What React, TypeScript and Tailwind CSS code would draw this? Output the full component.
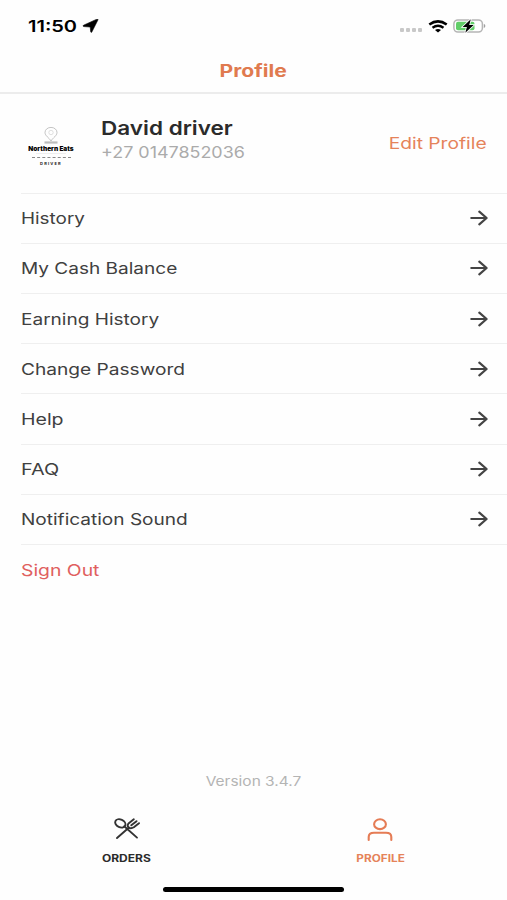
import React from 'react';

interface MenuItem {
  label: string;
  // horizontal stretch for the label
  stretch: string;
}

const menuItems: MenuItem[] = [
  { label: 'History', stretch: 'scale-x-[1.18]' },
  { label: 'My Cash Balance', stretch: 'scale-x-[1.19]' },
  { label: 'Earning History', stretch: 'scale-x-[1.19]' },
  { label: 'Change Password', stretch: 'scale-x-[1.195]' },
  { label: 'Help', stretch: 'scale-x-[1.22]' },
  { label: 'FAQ', stretch: 'scale-x-[1.24]' },
  { label: 'Notification Sound', stretch: 'scale-x-[1.19]' },
];

const StatusBar: React.FC = () => (
  <div className="h-[50px] flex items-center justify-between pl-[28px] pr-[20px] pt-[2px]">
    <div className="flex items-center">
      <span className="w-[50px] text-[16px] leading-none font-semibold text-black">
        <span className="inline-block origin-left scale-x-[1.25]">11:50</span>
      </span>
      <svg className="ml-[4px]" width="17" height="14" viewBox="0 0 17 14">
        <path d="M16 0.8 9.8 13.1Q9 13.9 8.700 12.800L8.200 8 2 7.600Q0 7.100 1.600 6.200L14.800 0.2Q16.400 -0.100 16 0.800Z" fill="#000" stroke="#000" strokeWidth="0.6" />
      </svg>
    </div>
    <div className="flex items-center">
      <div className="flex gap-[2px] mt-[8px] mr-[6px]">
        <span className="w-[4px] h-[4px] rounded-[1px] bg-[#c8c8c8]"></span>
        <span className="w-[4px] h-[4px] rounded-[1px] bg-[#c8c8c8]"></span>
        <span className="w-[4px] h-[4px] rounded-[1px] bg-[#c8c8c8]"></span>
        <span className="w-[4px] h-[4px] rounded-[1px] bg-[#c8c8c8]"></span>
      </div>
      <svg width="20" height="13" viewBox="0 0 20 13">
        <path d="M1.300 4.600Q10 -1.800 18.700 4.600" fill="none" stroke="#000" strokeWidth="2.500" />
        <path d="M4.500 7.800Q10 3.800 15.500 7.800" fill="none" stroke="#000" strokeWidth="2.300" />
        <path d="M7 10Q10 7.900 13 10L10 12.600Z" fill="#000" />
      </svg>
      <svg className="ml-[5px]" width="34" height="16" viewBox="0 0 34 16">
        <rect x="0.9" y="1.900" width="28.500" height="12.200" rx="4" fill="#fff" stroke="#b5b5b5" strokeWidth="1.500" />
        <rect x="3" y="3.800" width="18.500" height="8.400" rx="2" fill="#62cf69" />
        <path d="M30.800 5.800Q34 8 30.800 10.200Z" fill="#a0a0a0" />
        <path d="M17.800 1.300 9.600 8.900H13.900L12.300 14.800 20.700 7.100H16.200Z" fill="#000" stroke="#fff" strokeWidth="1.600" paintOrder="stroke" />
      </svg>
    </div>
  </div>
);

const Avatar: React.FC = () => (
  <div className="w-[60px] h-[60px] flex flex-col items-center overflow-hidden text-[#222]">
    <svg className="mt-[8px] shrink-0" width="16" height="17" viewBox="0 0 16 17">
      <path d="M8 14C6 10.500 2 9 2 5.400A6 5 0 0 1 14 5.400C14 9 10 10.500 8 14Z" fill="none" stroke="#aaa" strokeWidth="0.7" />
      <circle cx="8" cy="5.500" r="2.200" fill="none" stroke="#ccc" strokeWidth="0.6" />
      <path d="M1.500 15.500H14.500" stroke="#bdbdbd" strokeWidth="2.200" />
    </svg>
    <span className="mt-px text-[6px] leading-[7px] font-black text-black whitespace-nowrap scale-x-[1.08]">Northern Eats</span>
    <div className="mt-px h-px w-[30px] bg-[#eeeeee]"></div>
    <div className="mt-[3px] h-[2px] w-[39px] border-t border-dashed border-[#888]"></div>
    <span className="mt-[3px] text-[4px] leading-[4px] font-bold tracking-[1.2px] whitespace-nowrap">DRIVER</span>
  </div>
);

const ArrowIcon: React.FC = () => (
  <svg width="18" height="16" viewBox="0 0 18 16" fill="none" stroke="#444" strokeWidth="2.200" strokeLinecap="round" strokeLinejoin="round">
    <path d="M1.300 8H16.500M9.300 1.700 16.600 8 9.300 14.300" />
  </svg>
);

const OrdersIcon: React.FC = () => (
  <svg width="28" height="22" viewBox="0 0 28 22" fill="none" stroke="#333" strokeWidth="1.900" strokeLinecap="round" strokeLinejoin="round">
    <ellipse cx="7.300" cy="5.400" rx="5.400" ry="3.800" transform="rotate(25 7.300 5.400)" />
    <path d="M11.200 8.300 24 19.600M4 20 16 9.500" />
    <path d="M20.800 1.300 15.800 5.200Q13.700 7.500 15.500 9.400 17.800 11.200 20.800 9.300L26 5.200M23.500 3.200 18.300 7.300" />
  </svg>
);

const ProfileIcon: React.FC = () => (
  <svg width="26" height="24" viewBox="0 0 26 24" fill="none" stroke="#e57c55" strokeWidth="2.100" strokeLinecap="round">
    <ellipse cx="13" cy="6.200" rx="5.900" ry="4.900" />
    <path d="M1.700 22V19Q1.700 14.800 7 14.800H19Q24.300 14.800 24.300 19V22" />
  </svg>
);

const App: React.FC = () => {
  return (
    <div className="w-[507px] h-[900px] flex flex-col overflow-hidden bg-[#fefefe] font-['Inter',sans-serif]">
      <StatusBar />

      <header className="h-[44px] pt-[2px] flex items-center justify-center border-b-2 border-[#ececec]">
        <h1 className="text-[17px] font-bold text-[#e07a4f] scale-x-[1.24]">Profile</h1>
      </header>

      <section className="h-[98.6px] flex pl-[21px] pr-[20px]">
        <div className="mt-[25px]">
          <Avatar />
        </div>
        <div className="ml-[20px] pt-[23px] flex-1">
          <h2 className="w-fit text-[19px] leading-[24px] font-semibold text-[#2b2b2b] origin-left scale-x-[1.185]">David driver</h2>
          <p className="w-fit text-[16px] leading-[23px] text-[#ababab] origin-left scale-x-[1.12]">+27 0147852036</p>
        </div>
        <button className="h-[98px] text-[16px] text-[#e5835a] origin-right scale-x-[1.2] whitespace-nowrap">Edit Profile</button>
      </section>

      <nav className="pl-[21px]">
        {menuItems.map((item) => (
          <a key={item.label} className="h-[50.2px] flex items-center justify-between pr-[19px] border-t border-[#efefef]">
            <span className={`text-[16px] text-[#404040] origin-left ${item.stretch}`}>{item.label}</span>
            <ArrowIcon />
          </a>
        ))}
        <a className="h-[50.2px] flex items-center border-t border-[#efefef]">
          <span className="text-[16px] text-[#e0605f] origin-left scale-x-[1.21]">Sign Out</span>
        </a>
      </nav>

      <div className="flex-1"></div>

      <p className="text-center text-[13px] leading-[20px] text-[#b4b4b4] scale-x-[1.19]">Version 3.4.7</p>

      <footer className="h-[109px] flex flex-col justify-between">
        <div className="flex pt-[27px]">
          <a className="w-1/2 flex flex-col items-center h-[47px] justify-between text-[#2b2b2b]">
            <OrdersIcon />
            <span className="text-[10px] leading-[14px] font-bold scale-x-[1.2]">ORDERS</span>
          </a>
          <a className="w-1/2 flex flex-col items-center h-[47px] justify-between text-[#e5835a]">
            <ProfileIcon />
            <span className="text-[10px] leading-[14px] font-bold scale-x-[1.18]">PROFILE</span>
          </a>
        </div>
        <div className="mx-auto mb-[8px] w-[181px] h-[5px] rounded-full bg-black"></div>
      </footer>
    </div>
  );
};

export default App;
